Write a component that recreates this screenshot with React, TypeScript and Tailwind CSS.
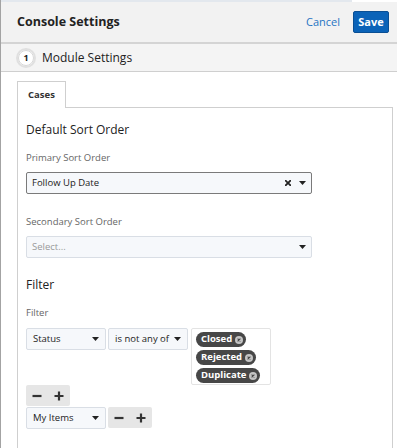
import React from "react";

const Caret = () => (
  <svg width="7" height="4" viewBox="0 0 7 4" className="shrink-0">
    <path d="M0 0 L7 0 L3.5 4 Z" fill="#222" />
  </svg>
);

const Times = () => (
  <svg width="6" height="6" viewBox="0 0 6 6" className="shrink-0">
    <path d="M0.8 0.8 L5.2 5.2 M5.2 0.8 L0.8 5.2" stroke="#222" strokeWidth="1.8" strokeLinecap="square" />
  </svg>
);

const Minus = () => (
  <svg width="10" height="10" viewBox="0 0 10 10">
    <path d="M0.5 5 H9.5" stroke="#333" strokeWidth="2.2" />
  </svg>
);

const Plus = () => (
  <svg width="10" height="10" viewBox="0 0 10 10">
    <path d="M0.5 5 H9.5 M5 0.5 V9.5" stroke="#333" strokeWidth="2.2" />
  </svg>
);

const PillX = () => (
  <svg width="8" height="8" viewBox="0 0 8 8" className="shrink-0">
    <circle cx="4" cy="4" r="4" fill="#c4c4c4" />
    <path d="M2.6 2.6 L5.4 5.4 M5.4 2.6 L2.6 5.4" stroke="#444" strokeWidth="1.1" />
  </svg>
);

const PlusMinus = () => (
  <div className="flex h-[21px] w-[44px] rounded-[2px] bg-[#e6e6e6]">
    <div className="flex w-[22px] items-center justify-center"><Minus /></div>
    <div className="flex w-[22px] items-center justify-center"><Plus /></div>
  </div>
);

const SmallSelect = ({ label }: { label: string }) => (
  <div className="flex h-[22px] w-[80px] items-center justify-between rounded-[2px] border border-[#d9dee5] bg-[#f6f8fb] pl-[6px] pr-[6px] text-[9.5px] text-[#222]">
    <span>{label}</span>
    <Caret />
  </div>
);

const Pill = ({ label }: { label: string }) => (
  <div className="flex h-[15px] items-center gap-[3px] self-start rounded-full bg-[#474747] pl-[5px] pr-[3px] text-[9.5px] font-bold text-white">
    <span>{label}</span>
    <PillX />
  </div>
);

export default function App() {
  return (
    <div className="h-[448px] w-[397px] overflow-hidden border-l border-[#a3a3a3] bg-white font-['Open_Sans',sans-serif] text-[#222]">
      <div className="flex h-[2px]">
        <div className="w-[351px] bg-[#e3e8ee]" />
      </div>
      <div className="flex h-[42px] items-center justify-between border-b-2 border-[#d4d4d4] bg-[#f2f2f2] pl-[16px] pr-[8px]">
        <span className="text-[12.5px] font-bold text-[#222]">Console Settings</span>
        <div className="flex items-center gap-[13px]">
          <span className="text-[11px] text-[#1f74c3]">Cancel</span>
          <div className="flex h-[22px] w-[36px] items-center justify-center rounded-[2px] border border-[#0a4f94] bg-[#0b63b8] text-[11px] font-bold text-white">
            Save
          </div>
        </div>
      </div>
      <div className="flex h-[28px] items-center gap-[6px] border-b border-[#cfcfcf] bg-[#f4f4f4] pl-[15px]">
        <div className="flex h-[20px] w-[20px] items-center justify-center rounded-full border-2 border-[#e0e0e0] bg-white">
          <div className="flex h-[16px] w-[16px] items-center justify-center rounded-full border border-[#d8d8d8] text-[9px] font-bold text-[#222]">
            1
          </div>
        </div>
        <span className="text-[12px] text-[#222]">Module Settings</span>
      </div>

      <div className="ml-[16px] mt-[9px]">
        <div className="relative z-10 flex h-[27px] w-[49px] items-center justify-center border border-b-0 border-[#cfcfcf] bg-white text-[9.5px] font-bold text-[#333]">
          Cases
        </div>
        <div className="-mt-px h-[400px] w-[376px] border border-[#cfcfcf] pl-[8px]">
          <div className="mt-[14px] h-[16px] text-[12px] leading-[16px] text-[#222]">Default Sort Order</div>
          <div className="mt-[13px] h-[14px] text-[9.5px] leading-[14px] text-[#666]">Primary Sort Order</div>
          <div className="mt-[7px] flex h-[22px] w-[286px] items-center justify-between rounded-[2px] border border-[#7a7a7a] bg-[#f6f8fb] pl-[5px] pr-[5px] text-[9.5px] text-[#222]">
            <span>Follow Up Date</span>
            <div className="flex items-center gap-[8px]">
              <Times />
              <Caret />
            </div>
          </div>
          <div className="mt-[21px] h-[14px] text-[9.5px] leading-[14px] text-[#666]">Secondary Sort Order</div>
          <div className="mt-[7px] flex h-[22px] w-[286px] items-center justify-between rounded-[2px] border border-[#d9dee5] bg-[#f6f8fb] pl-[5px] pr-[5px] text-[9.5px] text-[#999]">
            <span>Select...</span>
            <Caret />
          </div>
          <div className="mt-[19px] h-[16px] text-[12px] leading-[16px] text-[#222]">Filter</div>
          <div className="mt-[13px] h-[14px] text-[9.5px] leading-[14px] text-[#666]">Filter</div>
          <div className="mt-[8px] flex items-start">
            <SmallSelect label="Status" />
            <div className="ml-[2px]">
              <SmallSelect label="is not any of" />
            </div>
            <div className="ml-[3px] flex h-[57px] w-[80px] flex-col gap-[3px] rounded-[2px] border border-[#e3e3e3] bg-white pl-[4px] pt-[3px]">
              <Pill label="Closed" />
              <Pill label="Rejected" />
              <Pill label="Duplicate" />
            </div>
          </div>
          <div className="mt-[0px]">
            <PlusMinus />
          </div>
          <div className="mt-[1px] flex items-start gap-[2px]">
            <SmallSelect label="My Items" />
            <div className="h-[22px]">
              <PlusMinus />
            </div>
          </div>
        </div>
      </div>
    </div>
  );
}
